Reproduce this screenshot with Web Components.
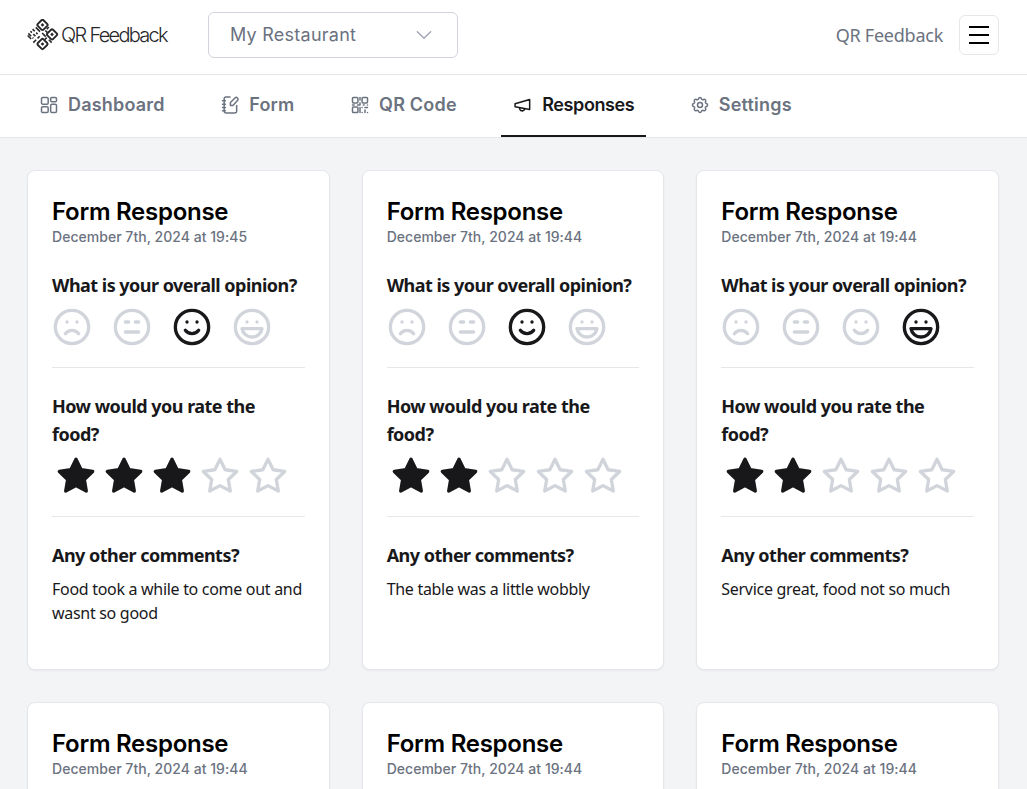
<!DOCTYPE html>
<html>
<head>
<meta charset="utf-8">
<title>QR Feedback</title>
<style>
html, body { margin: 0; height: 100%; overflow: hidden; }
body { background: #f3f4f6; color: #18181b; font-family: "Noto Sans", sans-serif; display: flex; flex-direction: column; }
</style>
</head>
<body>
<qf-header></qf-header>
<qf-tabs active="Responses"></qf-tabs>
<qf-grid>
  <qf-card date="December 7th, 2024 at 19:45">
    <qf-question label="What is your overall opinion?"><qf-faces value="2"></qf-faces></qf-question>
    <qf-question label="How would you rate the food?"><qf-stars value="3"></qf-stars></qf-question>
    <qf-question label="Any other comments?">Food took a while to come out and wasnt so good</qf-question>
  </qf-card>
  <qf-card date="December 7th, 2024 at 19:44">
    <qf-question label="What is your overall opinion?"><qf-faces value="2"></qf-faces></qf-question>
    <qf-question label="How would you rate the food?"><qf-stars value="2"></qf-stars></qf-question>
    <qf-question label="Any other comments?">The table was a little wobbly</qf-question>
  </qf-card>
  <qf-card date="December 7th, 2024 at 19:44">
    <qf-question label="What is your overall opinion?"><qf-faces value="3"></qf-faces></qf-question>
    <qf-question label="How would you rate the food?"><qf-stars value="2"></qf-stars></qf-question>
    <qf-question label="Any other comments?">Service great, food not so much</qf-question>
  </qf-card>
  <qf-card date="December 7th, 2024 at 19:44"></qf-card>
  <qf-card date="December 7th, 2024 at 19:44"></qf-card>
  <qf-card date="December 7th, 2024 at 19:44"></qf-card>
</qf-grid>
<script>
const svg = (size, body, extra = '') =>
    `<svg width="${size}" height="${size}" viewBox="0 0 24 24" fill="none" stroke="currentColor" stroke-width="2" stroke-linecap="round" stroke-linejoin="round" ${extra}>${body}</svg>`;

// logo tile: ring with a dot, rotated with the whole mark
const tile = (x, y) => `<rect x="${x}" y="${y}" width="8" height="8" rx="1.4" fill="none" stroke="#27272a" stroke-width="1.9"/><rect x="${x + 2.7}" y="${y + 2.7}" width="2.6" height="2.6" fill="#27272a"/>`;

customElements.define('qf-header', class extends HTMLElement {
    connectedCallback() {
        this.attachShadow({ mode: 'open' }).innerHTML =
            `<style>` +
            `:host{display:flex;align-items:center;box-sizing:border-box;height:75px;padding:0 28px 5px 27px;background:#fff;border-bottom:1px solid #e5e7eb;flex:none}` +
            `.logo{display:flex;align-items:center;width:181px;flex:none}` +
            `.logo svg{margin:2px 0 0 -1px}` +
            `.word{font:300 20px Inter,sans-serif;letter-spacing:-1.7px;color:#27272a;margin-left:2px}` +
            `.select{display:flex;align-items:center;justify-content:space-between;box-sizing:border-box;width:250px;height:46px;padding:0 23px 0 21px;border:1px solid #d1d5db;border-radius:6px;font:400 18px Inter,sans-serif;letter-spacing:.25px;color:#6b7280}` +
            `.select svg{color:#9ca3af}` +
            `.right{margin-left:auto;display:flex;align-items:center;gap:16px}` +
            `.name{font:400 18px "Noto Sans",sans-serif;letter-spacing:-.25px;color:#6b7280}` +
            `.menu{display:flex;flex-direction:column;justify-content:center;gap:6px;box-sizing:border-box;width:40px;height:40px;padding:0 9px;border:1px solid #e5e7eb;border-radius:6px}` +
            `.menu i{display:block;height:2px;background:#000}` +
            `</style>` +
            `<div class="logo"><svg width="33" height="33" viewBox="0 0 33 33"><g transform="rotate(45 16.5 16.5)">${tile(5, 5)}${tile(18.5, 5)}${tile(18.5, 18.5)}` +
            // left corner of the mark is loose dots, not a ring
            `<path d="M5 19h3M10 19h2M5 22h2M9 22h3M5 25h4M11 25h1M6 27h5" stroke="#27272a" stroke-width="1.6" fill="none"/>` +
            `<path d="M15 6v3M15 11h3M14.500 15h5M15 19v3M15 24v4M6 15.500h6M21 15v3M24 15h4" stroke="#27272a" stroke-width="1.6" fill="none"/></g></svg>` +
            `<span class="word">QR Feedback</span></div>` +
            `<div class="select"><span>My Restaurant</span>${svg(20, '<path d="m4 8 8 8 8-8"/>', 'style="stroke-width:1.6"')}</div>` +
            `<div class="right"><span class="name">QR Feedback</span><div class="menu"><i></i><i></i><i></i></div></div>`;
    }
});

const tabIcons = {
    Dashboard: '<rect x="3" y="3" width="8" height="8" rx="1.5"/><rect x="14" y="3" width="7" height="5" rx="1.5"/><rect x="3" y="14" width="8" height="7" rx="1.5"/><rect x="14" y="11" width="7" height="10" rx="1.5"/>',
    Form: '<path d="M12 2.500H7a2 2 0 0 0-2 2v15a2 2 0 0 0 2 2h11a2 2 0 0 0 2-2v-7"/><path d="M3 7h3.500M3 11h3.500M3 15h3.500M3 19h3.500"/><path d="M12.500 12.500v-3.500l5.500-5.500a2 2 0 0 1 3 3l-5.500 6z"/>',
    'QR Code': '<rect x="3" y="3" width="6.500" height="6.500" rx="1"/><rect x="14.500" y="3" width="6.500" height="6.500" rx="1"/><rect x="3" y="14.500" width="6.500" height="6.500" rx="1"/><path d="M12 3v3M12 9.500v2.500M3 12h2M9 12h3M16 12h1M21 12h.01M14.500 15v.01M14.500 21v.01M18 15h3M18 18v3M21 21v.01M12 15v6"/>',
    Responses: '<path d="M2.500 10.500 20 5.500v12L2.500 14z"/><path d="M8 15.500a3 3 0 0 0 6 1"/>',
    Settings: '<path d="M10.300 4.300c.4-1.700 3-1.700 3.400 0a1.700 1.700 0 0 0 2.600 1.100c1.500-.9 3.300.9 2.400 2.400a1.700 1.700 0 0 0 1 2.500c1.800.4 1.800 3 0 3.400a1.700 1.700 0 0 0-1 2.600c.9 1.500-.9 3.300-2.400 2.400a1.700 1.700 0 0 0-2.600 1c-.4 1.800-3 1.800-3.400 0a1.700 1.700 0 0 0-2.600-1c-1.500.9-3.300-.9-2.400-2.400a1.700 1.700 0 0 0-1-2.600c-1.800-.4-1.800-3 0-3.400a1.700 1.700 0 0 0 1-2.500c-.9-1.500.9-3.300 2.400-2.400 1 .6 2.300.1 2.600-1.100z"/><circle cx="12" cy="12" r="3"/>'
};

customElements.define('qf-tabs', class extends HTMLElement {
    connectedCallback() {
        let active = this.getAttribute('active');
        let items = Object.keys(tabIcons).map(name =>
            `<a class="${name === active ? 'on' : ''}">${svg(20, tabIcons[name])}<span>${name}</span></a>`).join('');
        this.attachShadow({ mode: 'open' }).innerHTML =
            `<style>` +
            `:host{display:flex;gap:32.5px;height:62px;padding:0 28px;background:#fff;border-bottom:1px solid #e5e7eb;flex:none}` +
            `a{display:flex;align-items:center;gap:9px;padding:0 12px 2px 11px;height:62px;box-sizing:border-box;font:600 18px Inter,sans-serif;letter-spacing:.2px;color:#6b7280;border-bottom:2px solid transparent}` +
            `a svg{stroke-width:1.8;flex:none;margin-top:2px}` +
            `a.on{color:#18181b;border-bottom-color:#18181b;letter-spacing:-.4px;padding-left:12px}` +
            `</style>${items}`;
    }
});

customElements.define('qf-grid', class extends HTMLElement {
    connectedCallback() {
        this.attachShadow({ mode: 'open' }).innerHTML =
            `<style>:host{display:grid;grid-template-columns:repeat(3,1fr);gap:32px;padding:32px 28px 32px 27px;align-content:start}</style><slot></slot>`;
    }
});

customElements.define('qf-card', class extends HTMLElement {
    connectedCallback() {
        this.attachShadow({ mode: 'open' }).innerHTML =
            `<style>` +
            `:host{display:block;box-sizing:border-box;padding:24px;background:#fff;border:1px solid #e5e7eb;border-radius:8px;box-shadow:0 1px 2px rgba(0,0,0,.05)}` +
            `h2{margin:0;padding-top:2px;font:600 24px/30px Inter,sans-serif;letter-spacing:-.27px;color:#000}` +
            `p{margin:0 0 24px;font:500 14px/20px Inter,sans-serif;letter-spacing:.03px;color:#6b7280}` +
            `</style><h2>Form Response</h2><p>${this.getAttribute('date')}</p><slot></slot>`;
    }
});

customElements.define('qf-question', class extends HTMLElement {
    connectedCallback() {
        this.attachShadow({ mode: 'open' }).innerHTML =
            `<style>` +
            `:host{display:block;padding-bottom:20px;margin-bottom:24px;border-bottom:1px solid #e5e7eb;font:400 16px/24px "Noto Sans",sans-serif;letter-spacing:-.3px;color:#18181b}` +
            `:host(:last-child){border-bottom:0;margin-bottom:0}` +
            `h3{margin:0 0 8px;font:700 18px/28px "Noto Sans",sans-serif;letter-spacing:-.52px}` +
            `</style><h3>${this.getAttribute('label')}</h3><slot></slot>`;
    }
});

const faces = [
    '<circle cx="12" cy="12" r="10"/><path d="M16 16s-1.500-2-4-2-4 2-4 2"/><path d="M9 9h.01M15 9h.01"/>',
    '<circle cx="12" cy="12" r="10"/><path d="M8 15h8"/><path d="M8 9h2M14 9h2"/>',
    '<circle cx="12" cy="12" r="10"/><path d="M8 14s1.500 2 4 2 4-2 4-2"/><path d="M9 9h.01M15 9h.01"/>',
    '<circle cx="12" cy="12" r="10"/><path d="M18 13a6 6 0 0 1-6 5 6 6 0 0 1-6-5h12z"/><path d="M9 9h.01M15 9h.01"/>'
];

customElements.define('qf-faces', class extends HTMLElement {
    connectedCallback() {
        let value = +this.getAttribute('value');
        this.attachShadow({ mode: 'open' }).innerHTML =
            `<style>:host{display:flex;gap:20px;height:40px}svg{color:#d1d5db;display:block}svg.on{color:#18181b}</style>` +
            faces.map((face, i) => svg(40, face, i === value ? 'class="on"' : '')).join('');
    }
});

const star = '<polygon points="12 2 15.09 8.26 22 9.27 17 14.14 18.18 21.02 12 17.77 5.82 21.02 7 14.14 2 9.27 8.91 8.26 12 2"/>';

customElements.define('qf-stars', class extends HTMLElement {
    connectedCallback() {
        let value = +this.getAttribute('value');
        let stars = '';
        for (let i = 0; i < 5; i++) stars += svg(40, star, i < value ? 'class="on"' : '');
        this.attachShadow({ mode: 'open' }).innerHTML =
            `<style>:host{display:flex;gap:8px;padding-left:4px;height:40px}svg{color:#d1d5db;display:block}svg.on{color:#18181b;fill:#18181b}</style>${stars}`;
    }
});
</script>
</body>
</html>
